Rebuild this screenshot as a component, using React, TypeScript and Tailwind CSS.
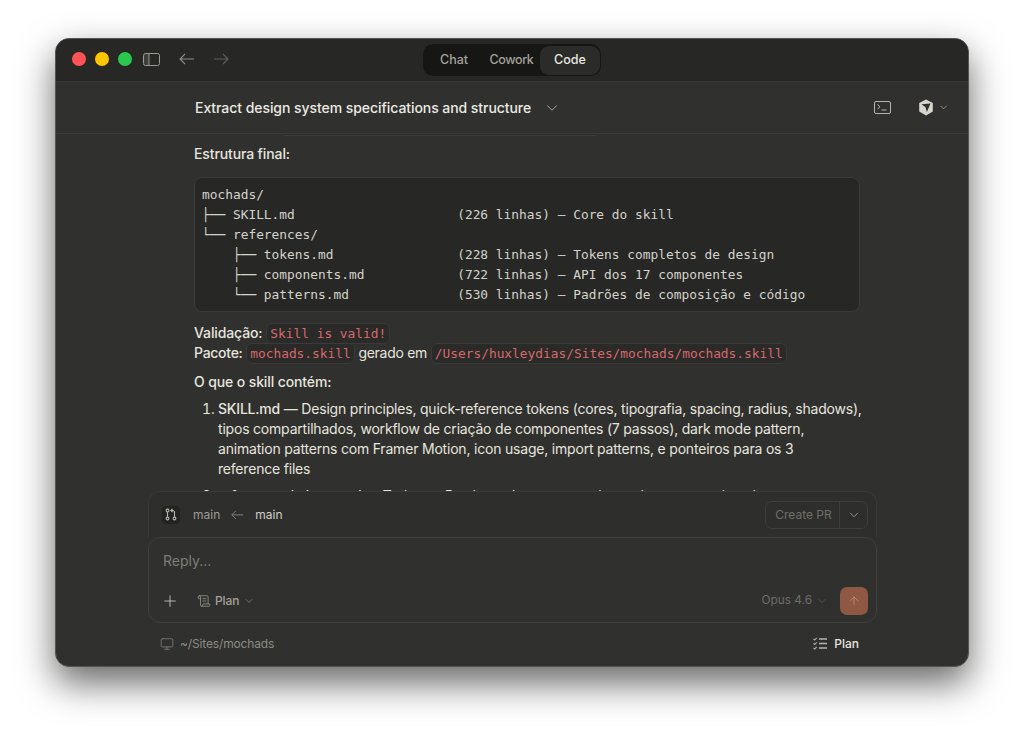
import { ArrowUp, ChevronDown, Monitor, Plus, ScrollText } from 'lucide-react';

const mono = "font-['DejaVu_Sans_Mono',monospace]";

const tree = `mochads/
├── SKILL.md                     (226 linhas) — Core do skill
└── references/
    ├── tokens.md                (228 linhas) — Tokens completos de design
    ├── components.md            (722 linhas) — API dos 17 componentes
    └── patterns.md              (530 linhas) — Padrões de composição e código`;

function Code({ children }: { children: string }) {
  return (
    <code className={`${mono} rounded-[6px] border border-[#3a3a38] bg-[#2a2a28] px-[3px] py-[2px] text-[12.85px] leading-none tracking-normal text-[#d8686c]`}>
      {children}
    </code>
  );
}

function CubeIcon() {
  return (
    <svg width="16" height="17" viewBox="0 0 16 17" className="text-[#d8d6cc]">
      <path d="M8 .5l6.800 3.600v8.400L8 16.500l-6.800-4V4.100z" fill="currentColor" />
      <path d="M3.500 5.200l9-.6-3.600 8.400-1.400-4.700z" fill="#30302e" />
    </svg>
  );
}

function LineArrow({ flip, className, size = 16 }: { flip?: boolean; className: string; size?: number }) {
  return (
    <svg width={size} height={size * 0.75} viewBox="0 0 16 12" fill="none" stroke="currentColor" strokeWidth="1.1" className={className}>
      <path d={flip ? 'M15 6H1M10 1l5 5-5 5' : 'M1 6h14M6 1L1 6l5 5'} />
    </svg>
  );
}

function SidebarIcon() {
  return (
    <svg width="17" height="13" viewBox="0 0 17 13" fill="none" stroke="currentColor" strokeWidth="1" className="ml-[11px] text-[#9a9a92]">
      <rect x=".5" y=".5" width="16" height="12" rx="2" />
      <path d="M6 .5v12" />
      <path d="M1 1h5v11H1z" fill="currentColor" fillOpacity=".2" stroke="none" />
    </svg>
  );
}

function TerminalIcon() {
  return (
    <svg width="17" height="13" viewBox="0 0 17 13" fill="none" stroke="currentColor" strokeWidth="1" className="ml-auto text-[#b5b4ac]">
      <rect x=".5" y=".5" width="16" height="12" rx="1.500" />
      <path d="M3.500 3.500l2.500 2.300-2.500 2.300M7.500 9h5" />
    </svg>
  );
}

function BranchIcon() {
  return (
    <svg width="12" height="13" viewBox="0 0 12 13" fill="none" stroke="currentColor" strokeWidth="1.1" className="text-[#b5b4ac]">
      <circle cx="2.500" cy="2.500" r="1.400" />
      <circle cx="2.500" cy="10.500" r="1.400" />
      <circle cx="9.500" cy="10.500" r="1.400" />
      <path d="M2.500 4v5M9.500 9V4.500q0-2-2-2H6M7.500.8L5.800 2.500l1.700 1.700" />
    </svg>
  );
}

function PlanListIcon() {
  return (
    <svg width="14" height="13" viewBox="0 0 14 13" fill="none" stroke="currentColor" strokeWidth="1.1" className="ml-auto text-[#b5b4ac]">
      <path d="M.5 1.800l1.200 1.200L3.700.8M.5 6.300l1.200 1.200 2-2.200M.5 10.800L1.700 12l2-2.200" />
      <path d="M6 2h8M6 6.500h8M6 11h8" strokeWidth="1.300" />
    </svg>
  );
}

export default function App() {
  return (
    <div className="h-[740px] w-[1024px] overflow-hidden bg-white pl-[55px] pt-[38px] font-['Inter',sans-serif]">
      <div className="flex h-[629px] w-[914px] flex-col overflow-hidden rounded-[14px] border border-[#55554f] bg-[#30302e] shadow-[0_16px_36px_rgba(0,0,0,0.6)]">
        {/* barra de titulo */}
        <div className="relative flex h-[43px] shrink-0 items-center border-b border-[#3a3a38] bg-[#272725] pb-[2px] pl-[16px]">
          <div className="flex gap-[9px]">
            <span className="h-[14px] w-[14px] rounded-full bg-[#ff5257]" />
            <span className="h-[14px] w-[14px] rounded-full bg-[#ffc600]" />
            <span className="h-[14px] w-[14px] rounded-full bg-[#2ac84f]" />
          </div>
          <SidebarIcon />
          <LineArrow className="ml-[19px] text-[#8c8c85]" />
          <LineArrow flip className="ml-[18px] text-[#5f5f5a]" />
          <div className="absolute left-[367px] top-[5px] flex h-[32px] w-[178px] items-center rounded-[10px] bg-[#161614] p-[1px] text-[12.500px] font-medium">
            <span className="w-[58px] pl-[2px] text-center text-[#a3a39b]">Chat</span>
            <span className="w-[58px] pl-[1px] text-center tracking-[-0.4px] text-[#a3a39b]">Cowork</span>
            <span className="flex h-[29px] flex-1 items-center justify-center rounded-[9px] bg-[#2b2b29] text-[#e9e8e1]">Code</span>
          </div>
        </div>

        {/* cabecalho */}
        <div className="flex h-[52px] shrink-0 items-center border-b border-[#3a3a38] pl-[139px] pr-[19px]">
          <span className="text-[14px] font-medium tracking-[-0.06px] text-[#ebeae3]">Extract design system specifications and structure</span>
          <ChevronDown size={18} strokeWidth={1.2} className="ml-[12px] text-[#b5b4ac]" />
          <TerminalIcon />
          <div className="ml-[27px] flex items-center gap-[4px]">
            <CubeIcon />
            <ChevronDown size={11} strokeWidth={1.5} className="text-[#b5b4ac]" />
          </div>
        </div>

        {/* mensagens */}
        <div className="h-[357px] shrink-0 overflow-hidden pl-[138px]">
          <div className="-mt-[19px] w-[666px] text-[14px] leading-[20px] tracking-[-0.12px] text-[#e6e5de]">
            <p className="h-[20px] font-medium">
              Summary: <span className="ml-[14px] inline-block h-[21px] w-[322px] rounded-[5px] border border-[#3a3a38] bg-[#2d2d2b] align-top" />
            </p>
            <p className="mt-[9px] font-medium">Estrutura final:</p>
            <pre className={`${mono} mt-[13px] h-[135px] rounded-[8px] border border-[#3a3a38] bg-[#272725] px-[7px] py-[7px] text-[12.85px] leading-[20px] tracking-normal text-[#d4d3cb]`}>{tree}</pre>
            <p className="mt-[11px]"><span className="font-medium">Validação:</span> <Code>Skill is valid!</Code></p>
            <p className="tracking-[-0.28px]"><span className="font-medium">Pacote:</span> <Code>mochads.skill</Code> gerado em <Code>/Users/huxleydias/Sites/mochads/mochads.skill</Code></p>
            <p className="mt-[9px] font-medium">O que o skill contém:</p>
            <ol className="mt-[7px] list-decimal whitespace-nowrap pl-[24px] tracking-[-0.2px] marker:text-[#e6e5de]">
              <li>
                <span className="font-medium">SKILL.md</span> — Design principles, quick-reference tokens (cores, tipografia, spacing, radius, shadows),<br />
                tipos compartilhados, workflow de criação de componentes (7 passos), dark mode pattern,<br />
                animation patterns com Framer Motion, icon usage, import patterns, e ponteiros para os 3<br />
                reference files
              </li>
              <li className="mt-[7px]">
                <span className="font-medium">references/tokens.md</span> — Todas as 5 paletas de cores com hex values, semantic color usage
              </li>
            </ol>
          </div>
        </div>

        {/* composer */}
        <div className="ml-[92px] w-[729px] shrink-0">
          <div className="flex h-[46px] items-center rounded-t-[12px] border border-b-0 border-[#3a3a38] bg-[#2e2e2c] pl-[13px] pr-[8px]">
            <span className="flex h-[18px] w-[18px] items-center justify-center rounded-[4px] bg-[#232321]">
              <BranchIcon />
            </span>
            <span className="ml-[13px] text-[12px] text-[#9d9c95]">main</span>
            <LineArrow size={13} className="ml-[11px] text-[#8c8c85]" />
            <span className="ml-[11px] text-[12px] text-[#cfcec6]">main</span>
            <div className="ml-auto flex h-[28px] items-center rounded-[7px] border border-[#3d3d3a]">
              <span className="flex h-full w-[74px] items-center justify-center border-r border-[#3d3d3a] pl-[2px] text-[12px] text-[#6e6e68]">Create PR</span>
              <span className="flex w-[27px] justify-center">
                <ChevronDown size={14} strokeWidth={1.5} className="text-[#a3a39b]" />
              </span>
            </div>
          </div>
          <div className="flex h-[86px] flex-col rounded-[12px] border border-[#3f3f3c] bg-[#30302e] px-[14px]">
            <span className="mt-[13px] text-[14px] leading-[20px] text-[#7d7d76]">Reply...</span>
            <div className="mt-[16px] flex items-center">
              <Plus size={18} strokeWidth={1.2} className="-ml-[2px] text-[#c4c3bb]" />
              <ScrollText size={14} strokeWidth={1.2} className="ml-[18px] text-[#a3a39b]" />
              <span className="ml-[4px] text-[12px] font-medium tracking-[-0.1px] text-[#a3a39b]">Plan</span>
              <ChevronDown size={12} strokeWidth={1.4} className="ml-[4px] text-[#8c8c85]" />
              <span className="ml-auto text-[11.800px] text-[#6e6e68]">Opus 4.6</span>
              <ChevronDown size={12} strokeWidth={1.4} className="ml-[4px] text-[#5f5f5a]" />
              <span className="-mr-[6px] ml-[12px] flex h-[28px] w-[28px] items-center justify-center rounded-[7px] bg-[#8f5843]">
                <ArrowUp size={14} strokeWidth={1.3} className="text-[#c09080]" />
              </span>
            </div>
          </div>
        </div>

        {/* rodape */}
        <div className="ml-[104px] flex h-[41px] w-[699px] items-center">
          <Monitor size={14} strokeWidth={1.2} className="text-[#8c8c85]" />
          <span className="ml-[6px] text-[12px] tracking-[-0.15px] text-[#8c8c85]">~/Sites/mochads</span>
          <PlanListIcon />
          <span className="ml-[7px] text-[12px] font-medium text-[#e6e5de]">Plan</span>
        </div>
      </div>
    </div>
  );
}
